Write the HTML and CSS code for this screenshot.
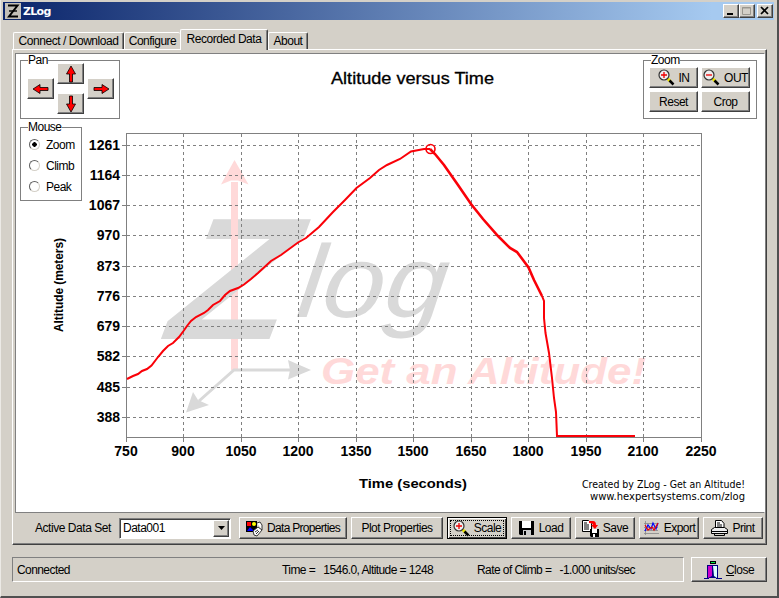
FILE: index.html
```html
<!DOCTYPE html>
<html lang="en">
<head>
    <meta charset="UTF-8">
    <title>ZLog</title>
    <link rel="stylesheet" href="styles.css">
</head>
<body>
    <div class="window">
        <header class="titlebar">
            <svg class="app-icon" width="16" height="16" viewBox="0 0 16 16">
                <rect width="16" height="16" fill="#c4c0b8"/>
                <path d="M3 2.500h9.500L4 13.500h9" fill="none" stroke="#000" stroke-width="2"/>
                <path d="M4 8h8" stroke="#000" stroke-width="1.400"/>
            </svg>
            <h1>ZLog</h1>
            <div class="caption-buttons">
                <button class="btn"><svg width="12" height="10"><path d="M2 8h6" stroke="#000" stroke-width="2"/></svg></button>
                <button class="btn"><svg width="12" height="10"><path d="M1.5 1.5h8v7h-8zM1 2h9" fill="none" stroke="#9a978f"/></svg></button>
                <button class="btn close"><svg width="12" height="10"><path d="M2 1l7 7M9 1l-7 7" stroke="#000" stroke-width="1.7"/></svg></button>
            </div>
        </header>

        <nav class="tabs">
            <div class="tab tab-connect">Connect / Download</div>
            <div class="tab tab-configure">Configure</div>
            <div class="tab tab-recorded active">Recorded Data</div>
            <div class="tab tab-about">About</div>
        </nav>

        <main class="page">
            <div class="plot">
                <svg class="chart" width="747" height="458" viewBox="16 54 747 458">
                    <!-- watermark -->
                    <path d="M231 370V182h7v188z" fill="#ffd9d9"/>
                    <path d="M234.500 160l14 24.500-10.500-4h-7l-10 4z" fill="#ffd9d9"/>
                    <text class="mark-z" transform="translate(165.500 338.700) scale(1.130 1) skewX(-8)">Z</text>
                    <text class="mark-log" transform="translate(295 317) skewX(-7)" textLength="149" lengthAdjust="spacingAndGlyphs">log</text>
                    <path d="M231 182h7v80l-7 5z" fill="#ffd9d9"/>
                    <path d="M296 370h-62l-35 31" fill="none" stroke="#d9d9d9" stroke-width="3"/>
                    <path d="M311 370l-23 9.500 2-9.500-2-10zM186 412.500l7-20.500 5 8 11 5z" fill="#d9d9d9"/>
                    <text class="mark-slogan" x="321" y="384" textLength="325" lengthAdjust="spacingAndGlyphs">Get an Altitude!</text>

                    <!-- grid -->
                    <g class="grid">
                        <path d="M127 145.500h575M127 175.500h575M127 205.500h575M127 235.500h575M127 266.500h575M127 296.500h575M127 326.500h575M127 356.500h575M127 387.500h575M127 417.500h575"/>
                        <path d="M183.500 134v303M241.500 134v303M298.500 134v303M356.500 134v303M413.500 134v303M471.500 134v303M528.500 134v303M586.500 134v303M643.500 134v303"/>
                    </g>
                    <g class="axis">
                        <rect x="126.500" y="133.500" width="575" height="304"/>
                        <path d="M122 145.500h4M122 175.500h4M122 205.500h4M122 235.500h4M122 266.500h4M122 296.500h4M122 326.500h4M122 356.500h4M122 387.500h4M122 417.500h4"/>
                        <path d="M126.500 438v4M183.500 438v4M241.500 438v4M298.500 438v4M356.500 438v4M413.500 438v4M471.500 438v4M528.500 438v4M586.500 438v4M643.500 438v4M701.500 438v4"/>
                    </g>

                    <!-- altitude trace -->
                    <polyline class="trace" points="127,379 133,376 138,374 142,371 147,369 151.500,365.500 158,357 163,351 168,346 173,343 179,337 183.500,331 187,326 191,321 196,317 204,313 208,310 213,305 220,301 225,295 230,291 238,288 244,284.500 251,279 258,273 271,261 281,255 298,242.500 306,238 319,227 333,212 345,200 356.500,188 370,178 379,170 387,165 400,159 411,151.500 424,149 430,149"/>
                    <polyline class="trace descent" points="430,149 435,154 444,165 458,185 471,204 483,219 498,236 510,248 517,252 523,260 528.500,267.500 534,280 542,296"/>
                    <polyline class="trace" points="542,296 544,301 544,318 545.500,333 549,353 552,378 554,398 556,412 557,436 635,436"/>
                    <circle class="trace marker" cx="430.500" cy="149" r="4.500"/>

                    <text class="chart-title" x="331" y="84" textLength="163" lengthAdjust="spacingAndGlyphs">Altitude versus Time</text>
                    <g class="label-y">
                        <text x="120" y="150">1261</text>
                        <text x="120" y="180">1164</text>
                        <text x="120" y="210">1067</text>
                        <text x="120" y="240">970</text>
                        <text x="120" y="271">873</text>
                        <text x="120" y="301">776</text>
                        <text x="120" y="331">679</text>
                        <text x="120" y="361">582</text>
                        <text x="120" y="392">485</text>
                        <text x="120" y="422">388</text>
                    </g>
                    <g class="label-x">
                        <text x="126" y="456">750</text>
                        <text x="183" y="456">900</text>
                        <text x="241" y="456">1050</text>
                        <text x="298" y="456">1200</text>
                        <text x="356" y="456">1350</text>
                        <text x="413" y="456">1500</text>
                        <text x="471" y="456">1650</text>
                        <text x="528" y="456">1800</text>
                        <text x="586" y="456">1950</text>
                        <text x="643" y="456">2100</text>
                        <text x="701" y="456">2250</text>
                    </g>
                    <text class="axis-y" transform="translate(63 332) rotate(-90)" textLength="94">Altitude (meters)</text>
                    <text class="axis-x" x="359" y="488" textLength="108" lengthAdjust="spacingAndGlyphs">Time (seconds)</text>
                    <text class="credit" x="582" y="488" textLength="163" lengthAdjust="spacingAndGlyphs">Created by ZLog - Get an Altitude!</text>
                    <text class="credit" x="590" y="500" textLength="155" lengthAdjust="spacingAndGlyphs">www.hexpertsystems.com/zlog</text>
                </svg>

                <div class="side">
                    <fieldset class="pan">
                        <legend>Pan</legend>
                        <button class="btn left"><svg width="18" height="12" viewBox="0 0 18 12"><path class="arrow" d="M1 6l7-4.500v3h8v3H8v3z"/></svg></button>
                        <button class="btn up"><svg width="12" height="18" viewBox="0 0 12 18"><path class="arrow" d="M6 1l4.500 8h-3v8h-3V9h-3z"/></svg></button>
                        <button class="btn down"><svg width="12" height="18" viewBox="0 0 12 18"><path class="arrow" d="M6 17l4.500-8h-3V1h-3v8h-3z"/></svg></button>
                        <button class="btn right"><svg width="18" height="12" viewBox="0 0 18 12"><path class="arrow" d="M17 6l-7-4.500v3H2v3h8v3z"/></svg></button>
                    </fieldset>
                    <fieldset class="mouse">
                        <legend>Mouse</legend>
                        <div class="radio"><i class="dot checked"></i>Zoom</div>
                        <div class="radio"><i class="dot"></i>Climb</div>
                        <div class="radio"><i class="dot"></i>Peak</div>
                    </fieldset>
                </div>

                <fieldset class="zoom">
                    <legend>Zoom</legend>
                    <button class="btn">
                        <svg width="17" height="17" viewBox="0 0 17 17"><path d="M9.500 9.500l3 3" stroke="#e8e000" stroke-width="3"/><path d="M11.500 11.500l4 4" stroke="#000" stroke-width="2.500"/><circle cx="6" cy="6" r="5" fill="#eee" stroke="#333" stroke-width="1.200"/><path d="M3 6h6M6 3v6" stroke="#e00" stroke-width="1.300"/></svg>IN
                    </button>
                    <button class="btn">
                        <svg width="17" height="17" viewBox="0 0 17 17"><path d="M9.500 9.500l3 3" stroke="#e8e000" stroke-width="3"/><path d="M11.500 11.500l4 4" stroke="#000" stroke-width="2.500"/><circle cx="6" cy="6" r="5" fill="#eee" stroke="#333" stroke-width="1.200"/><path d="M3 6h6" stroke="#e00" stroke-width="1.300"/></svg>OUT
                    </button>
                    <button class="btn">Reset</button>
                    <button class="btn">Crop</button>
                </fieldset>
            </div>

            <div class="toolbar">
                <span class="set-label">Active Data Set</span>
                <div class="combo">
                    <span>Data001</span>
                    <button class="btn"><svg width="7" height="4"><path d="M0 0h7L3.500 4z"/></svg></button>
                </div>
                <button class="btn data-props">
                    <svg width="17" height="17" viewBox="0 0 17 17"><path d="M0 1h11v11H0z"/><path d="M1 2h4v4H1z" fill="#f00"/><circle cx="8" cy="4" r="2" fill="#ff0"/><path d="M4 7l4 4H1z" fill="#00f"/><path d="M7 11l5-4 4 3-5 6-3-1zM11 3l3-1 2 3v5" fill="#fff" stroke="#222" stroke-width=".9"/><path d="M9 12l3-2M10 14l3-3" stroke="#000" stroke-width=".8"/></svg>Data Properties
                </button>
                <button class="btn plot-props">Plot Properties</button>
                <button class="btn focus">
                    <svg width="17" height="17" viewBox="0 0 17 17"><path d="M9.500 9.500l3 3" stroke="#e8e000" stroke-width="3"/><path d="M11.500 11.500l4 4" stroke="#000" stroke-width="2.500"/><circle cx="6" cy="6" r="5" fill="#eee" stroke="#333" stroke-width="1.200"/><path d="M3 6h6M6 3v6" stroke="#e00" stroke-width="1.300"/></svg>Scale
                </button>
                <button class="btn load">
                    <svg width="16" height="16" viewBox="0 0 16 16"><path d="M0 1h15v14H1l-1-1z"/><path d="M3 1h9v7H3z" fill="#fff"/><path d="M4 10h8v5H4z" fill="#ccc"/><path d="M5 11h2v4H5z"/></svg>Load
                </button>
                <button class="btn save">
                    <svg width="17" height="17" viewBox="0 0 17 17"><path d="M.500.500h6l3 3v8h-9z" fill="#fff" stroke="#000"/><path d="M2 3h3M2 5h5M2 7h5M2 9h5" stroke="#000"/><path d="M7 1h4q3 0 3 4h2l-3 4-4-4h2q0-2-4-2z" fill="#f00"/><path d="M8 9h9v8H9l-1-1z"/><path d="M10 9h5v4h-5zM11 14h2v3h-2z" fill="#fff"/></svg>Save
                </button>
                <button class="btn export">
                    <svg width="17" height="16" viewBox="0 0 17 16"><path d="M2.500 1v14M1 13.500h15M1 3.500h14M1 7.500h14M1 10.500h14" stroke="#888" stroke-width=".8"/><path d="M2 11l3-6 3 4 2-6 3 6 2-6" fill="none" stroke="#00f" stroke-width="1.200"/><path d="M2 5l3 5 4-3 2 3 4-7" fill="none" stroke="#e00" stroke-width="1.200"/></svg>Export
                </button>
                <button class="btn print">
                    <svg width="17" height="16" viewBox="0 0 17 16"><path d="M4.500 8V.500h6l2.500 3V8" fill="#fff" stroke="#000"/><path d="M6 3h3M6 5h5M6 7h5" stroke="#000"/><path d="M.500 9.500l3-2h10l3 2v4H.500z" fill="#eee" stroke="#000"/><path d="M1 11.500h15M3.500 13.500v2h10v-2" fill="none" stroke="#000"/></svg>Print
                </button>
            </div>
        </main>

        <footer class="bottom">
            <div class="status">
                <span class="state">Connected</span>
                <span class="time">Time = &nbsp; 1546.0, Altitude = 1248</span>
                <span class="rate">Rate of Climb = &nbsp; -1.000 units/sec</span>
            </div>
            <button class="btn close-window">
                <svg width="18" height="18" viewBox="0 0 18 18"><path d="M6 0h6v3H6z" fill="#000"/><path d="M7 1h4v1H7z" fill="#0e4"/><path d="M3 4h11v13H3z" fill="#000080"/><path d="M4 5h4v10l-4 2z" fill="#c0c"/><path d="M9 5h4v12l-3-2z" fill="#dff"/><path d="M0 17.500h5M12 17.500h6" stroke="#008"/></svg><span><u>C</u>lose</span>
            </button>
        </footer>
    </div>
</body>
</html>
```
FILE: styles.css
```css
* {
    box-sizing: border-box;
}

body {
    margin: 0;
    background-color: #d4d0c8;
    font-family: "Liberation Sans", Arial, sans-serif;
    font-size: 12px;
    letter-spacing: -0.5px;
    color: #000;
}

.window {
    width: 779px;
    height: 598px;
    padding: 2px 3px 0;
    border-left: 1px solid #eceae6;
    border-right: 2px solid #505050;
    border-bottom: 2px solid #505050;
    overflow: hidden;
}

.btn {
    display: flex;
    align-items: center;
    justify-content: center;
    gap: 4px;
    padding: 0;
    background-color: #d4d0c8;
    border: 1px solid;
    border-color: #fff #404040 #404040 #fff;
    box-shadow: inset -1px -1px 0 #808080;
    font: inherit;
    letter-spacing: inherit;
    color: #000;
    white-space: nowrap;
}

/* title bar */
.titlebar {
    display: flex;
    align-items: center;
    height: 18px;
    margin-left: -1px;
    padding: 0 1px 0 2px;
    background: linear-gradient(to right, #0a246a, #a6caf0 92%);
}

.titlebar h1 {
    flex: 1;
    margin: 0 0 0 2px;
    font-family: "DejaVu Sans", sans-serif;
    font-size: 11px;
    letter-spacing: -0.7px;
    color: #fff;
}

.caption-buttons {
    display: flex;
}

.caption-buttons .btn {
    width: 16px;
    height: 14px;
}

.caption-buttons .close {
    margin-left: 2px;
}

/* tabs */
.tabs {
    display: flex;
    align-items: flex-end;
    height: 29px;
    margin-left: 9px;
}

.tab {
    height: 17px;
    padding-top: 1px;
    border: 1px solid;
    border-color: #fff #404040 transparent #fff;
    border-bottom: 0;
    border-radius: 2px 2px 0 0;
    box-shadow: inset -1px 0 0 #808080;
    text-align: center;
    white-space: nowrap;
}

.tab-connect {
    width: 111px;
    letter-spacing: -0.45px;
}

.tab-configure {
    width: 56px;
    border-right: 0;
    box-shadow: none;
}

.tab-recorded {
    width: 88px;
    letter-spacing: -0.45px;
}

.tab-about {
    width: 40px;
}

.tab.active {
    height: 21px;
    margin-bottom: -1px;
    padding-top: 2px;
    background-color: #d4d0c8;
    z-index: 1;
}

.page {
    width: 755px;
    height: 496px;
    margin-left: 8px;
    padding: 3px 2px 0;
    border: 1px solid;
    border-color: #fff #404040 #404040 #fff;
    box-shadow: inset -1px -1px 0 #808080;
}

/* plot area, controls share the chart's grid cell */
.plot {
    display: grid;
    width: 750px;
    height: 460px;
    border: 1px solid;
    border-color: #808080 #fff #808080 #808080;
    background-color: #fff;
}

.chart,
.side,
.zoom {
    grid-area: 1 / 1;
}

.chart {
    display: block;
    letter-spacing: 0;
}

.mark-z {
    font: italic bold 174px "Liberation Sans", sans-serif;
    fill: #d9d9d9;
}

.mark-log {
    font: italic 103px "Liberation Sans", sans-serif;
    fill: #d9d9d9;
}

.mark-slogan {
    font: italic bold 37px "Liberation Sans", sans-serif;
    fill: #ffd9d9;
}

.grid path {
    fill: none;
    stroke: #808080;
    stroke-dasharray: 3 3;
}

.axis rect,
.axis path {
    fill: none;
    stroke: #808080;
}

.trace {
    fill: none;
    stroke: #fa0008;
    stroke-width: 2;
}

.descent {
    stroke-width: 2.6;
}

.marker {
    stroke-width: 1.6;
}

.chart-title {
    font: 16px "Liberation Sans", sans-serif;
    stroke: #000;
    stroke-width: 0.3;
}

.label-x,
.label-y {
    font-size: 14px;
    font-weight: bold;
}

.label-x {
    text-anchor: middle;
}

.label-y {
    text-anchor: end;
}

.axis-x {
    font-size: 13px;
    font-weight: bold;
}

.axis-y {
    font-size: 12px;
    font-weight: bold;
}

.credit {
    font: 10px "DejaVu Sans", sans-serif;
}

/* group boxes */
fieldset {
    min-width: 0;
    margin: 0;
    padding: 0;
    border: 1px solid #808080;
}

legend {
    height: 13px;
    margin-left: 7px;
    padding: 0;
    line-height: 13px;
}

.side {
    justify-self: start;
    width: 104px;
    padding: 0 0 0 4px;
}

.pan {
    display: grid;
    grid-template-columns: 27px 27px 27px;
    grid-template-rows: 21px 21px;
    gap: 9px 3px;
    width: 100px;
    height: 65px;
    padding-left: 6px;
}

.pan legend {
    margin-left: 1px;
}

.pan .btn {
    height: 21px;
    transform: translateY(-4px);
}

.pan .left,
.pan .right {
    grid-row: 1 / 3;
    align-self: center;
}

.pan .left {
    grid-column: 1;
}

.pan .right {
    grid-column: 3;
}

.pan .up,
.pan .down {
    grid-column: 2;
}

.pan .up {
    grid-row: 1;
}

.pan .down {
    grid-row: 2;
}

.arrow {
    fill: #f00;
    stroke: #000;
    stroke-width: 0.8;
}

.mouse {
    width: 62px;
    height: 80px;
    margin-top: 2px;
}

.radio {
    display: flex;
    align-items: center;
    gap: 6px;
    height: 21px;
    margin-left: 8px;
}

.dot {
    width: 11px;
    height: 11px;
    border: 1px solid;
    border-color: #606060 #d4d0c8 #d4d0c8 #606060;
    border-radius: 50%;
}

.dot.checked {
    background: radial-gradient(circle, #000 2px, #fff 2.5px);
}

.zoom {
    display: grid;
    grid-template-columns: 49px 49px;
    grid-template-rows: 21px 21px;
    gap: 3px;
    justify-self: end;
    align-self: start;
    width: 114px;
    height: 65px;
    margin: 0 7px 0 0;
    padding-left: 5px;
}

.zoom legend {
    margin-left: 2px;
}

/* bottom row of the page */
.toolbar {
    display: flex;
    align-items: center;
    gap: 4px;
    height: 30px;
    padding-left: 20px;
}

.set-label {
    width: 80px;
    letter-spacing: -0.45px;
}

.combo {
    display: flex;
    align-items: center;
    width: 112px;
    height: 21px;
    margin-right: 4px;
    padding: 1px;
    border: 1px solid;
    border-color: #808080 #fff #fff #808080;
    box-shadow: inset 1px 1px 0 #404040;
    background-color: #fff;
}

.combo span {
    flex: 1;
    padding-left: 2px;
}

.combo .btn {
    width: 16px;
    height: 17px;
}

.toolbar > .btn {
    width: 60px;
    height: 22px;
}

.toolbar > .data-props {
    width: 108px;
    letter-spacing: -0.7px;
}

.toolbar > .plot-props {
    width: 92px;
}

.toolbar > .focus {
    border-color: #000;
    box-shadow: inset 1px 1px 0 #fff, inset -1px -1px 0 #404040;
    outline: 1px dotted #000;
    outline-offset: -4px;
}

/* status */
.bottom {
    display: flex;
    gap: 7px;
    margin: 12px 0 0 8px;
}

.status {
    display: flex;
    align-items: center;
    width: 672px;
    height: 25px;
    padding-left: 4px;
    border: 1px solid;
    border-color: #808080 #fff #fff #808080;
    letter-spacing: -0.58px;
}

.state {
    width: 265px;
}

.time {
    width: 195px;
}

.close-window {
    width: 76px;
    height: 25px;
}
```
